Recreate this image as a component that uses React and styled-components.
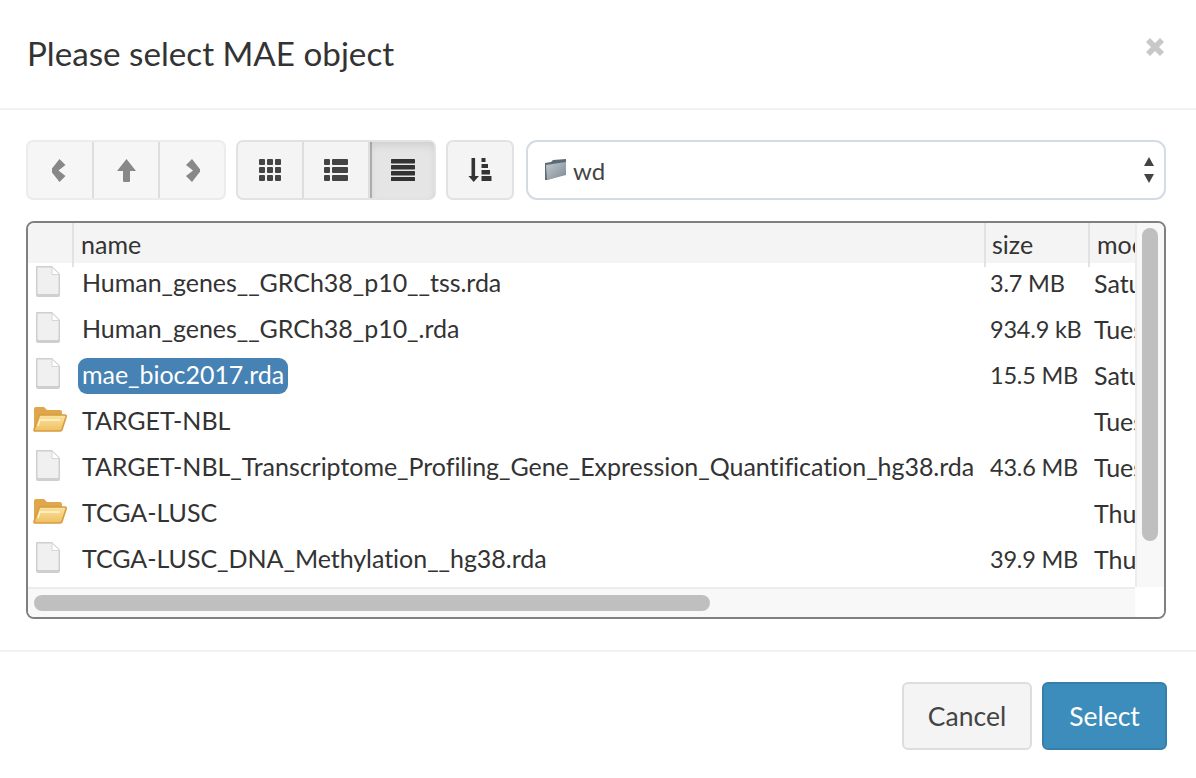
import React from "react";
import styled, { createGlobalStyle } from "styled-components";

const Global = createGlobalStyle`
  html, body { margin: 0; padding: 0; background: #fff; }
  body { font-family: "Lato", "Noto Sans", sans-serif; color: #333; }
  * { box-sizing: border-box; }
`;

const Modal = styled.div`width: 1196px; height: 778px; display: flex; flex-direction: column; background: #fff; overflow: hidden;`;
const Header = styled.header`height: 110px; flex: none; padding: 0 27px; display: flex; align-items: center; justify-content: space-between; border-bottom: 2px solid #f2f2f2;`;
const Title = styled.h4`margin: 0 0 2px; font-size: 33.2px; font-weight: 400; color: #333; line-height: 40px;`;
const Close = styled.button`border: 0; background: none; padding: 0; margin-right: 5px; width: 18px; height: 18px; display: flex; position: relative; top: -7px;`;
const Body = styled.main`flex: 1; padding: 30px 30px 0 26px; display: flex; flex-direction: column; gap: 21px;`;
const Toolbar = styled.div`display: flex; height: 60px; gap: 10px;`;
const Group = styled.div`display: flex; border: 2px solid ${p => p.$disabled ? "#ececec" : "#e2e2e2"}; border-radius: 7px; background: ${p => p.$disabled ? "#f6f6f6" : "#f4f4f4"}; overflow: hidden;`;
const ToolBtn = styled.button`
  width: ${p => p.$w || 66}px; border: 0; padding: 0; margin: 0; display: flex; align-items: center; justify-content: center;
  background: transparent;
  ${p => !p.$active && `& + & { border-left: 2px solid ${p.$disabled ? "#e6e6e6" : "#dedede"}; }`}
  ${p => p.$active && `background: #e5e5e5; box-shadow: inset 0 5px 9px rgba(0,0,0,.1), inset 0 0 0 2px #b4b4b4; margin: -2px -2px -2px 0; width: 68px; border-radius: 0 7px 7px 0; z-index: 1;`}
`;
const Select = styled.div`flex: 1; margin-left: 2px; border: 2px solid #d5dbe6; border-radius: 11px; display: flex; align-items: center; padding: 0 9px 0 16px; gap: 5px; font-size: 24px; color: #444;`;
const SelectText = styled.span`flex: 1;`;
const FileBox = styled.section`height: 398px; width: 1140px; border: 2px solid #808080; border-radius: 8px; display: grid; grid-template-columns: 1107px 1fr; grid-template-rows: 1fr 30px; overflow: hidden; font-size: 25px;`;
const Viewport = styled.div`overflow: hidden; display: flex; flex-direction: column;`;
const ColHead = styled.div`height: 40px; flex: none; background: #f4f4f4; display: grid; grid-template-columns: 44px 912px 104px 1fr; position: relative; z-index: 1;`;
const HeadCell = styled.div`padding-left: ${p => p.$pad ?? 6}px; padding-top: 3px; line-height: 36px; height: 44px; border-left: ${p => p.$first ? "0" : "2px solid #e2e2e2"}; overflow: hidden;`;
const Rows = styled.div`margin-top: -3px;`;
const Row = styled.div`height: 46px; display: grid; grid-template-columns: 50px 909px 104px 1fr; align-items: center; white-space: nowrap; padding-left: 3px;`;
const IconCell = styled.div`display: flex; justify-content: center; padding-right: 14px; margin-top: -4px;`;
const NameCell = styled.div``;
const Name = styled.span`
  display: inline-block; line-height: 32px; height: 36px; margin-top: 2px; padding: 0 4px; margin-left: -3px; border-radius: 9px; letter-spacing: -.04px;
  ${p => p.$selected && "background: #4682b4; color: #fff;"}
`;
const SizeCell = styled.div`overflow: hidden; font-size: 23.5px; letter-spacing: -.2px;`;
const Cell = styled.div`overflow: hidden;`;
const VTrack = styled.div`background: #f8f8f8; border-left: 2px solid #ececec; padding: 5px 5px 0;`;
const VThumb = styled.div`height: 313px; width: 16px; border-radius: 8px; background: #bfbfbf;`;
const HTrack = styled.div`background: #f8f8f8; border-top: 2px solid #ececec; padding: 6px 6px;`;
const HThumb = styled.div`height: 16px; width: 676px; border-radius: 8px; background: #bfbfbf;`;
const Corner = styled.div`background: #fff;`;
const Footer = styled.footer`height: 128px; flex: none; border-top: 2px solid #f2f2f2; display: flex; justify-content: flex-end; align-items: flex-start; padding: 30px 29px 0 0; gap: 10px;`;
const Btn = styled.button`
  height: 68px; border-radius: 6px; font: inherit; font-size: 26.5px; padding: 0;
  width: ${p => p.$primary ? 125 : 130}px;
  background: ${p => p.$primary ? "#3c8dbc" : "#f4f4f4"};
  color: ${p => p.$primary ? "#fff" : "#444"};
  border: 2px solid ${p => p.$primary ? "#367fa9" : "#ddd"};
`;

const Glyph = ({ w = 24, h = 24, fill, box, children }) => (
  <svg width={w} height={h} viewBox={box || `0 0 ${w} ${h}`} fill={fill}>{children}</svg>
);

const ChevLeft = () => <Glyph w={16} h={23} box="1.5 0 16 23" fill="#888"><path d="M9 0l6 6-7 5.5 7 5.5-6 6L0 11.5z" /></Glyph>;
const ChevRight = () => <Glyph w={16} h={23} box="-2 0 16 23" fill="#888"><path d="M6 0L0 6l7 5.5L0 17l6 6 9-11.5z" /></Glyph>;
const ArrowUp = () => <Glyph w={19} h={23} fill="#888"><path d="M9.5 0L19 12h-6v10a1 1 0 0 1-1 1H7a1 1 0 0 1-1-1V12H0z" /></Glyph>;
const Th = () => (
  <Glyph w={22} h={22} fill="#444">
    {[0, 8, 16].flatMap(y => [0, 8, 16].map(x => <rect key={`${x}-${y}`} x={x} y={y} width="6" height="6" rx="1" />))}
  </Glyph>
);
const ThList = () => (
  <Glyph w={24} h={22} fill="#444">
    {[0, 8, 16].map(y => <React.Fragment key={y}><rect x="0" y={y} width="6" height="6" rx="1" /><rect x="8" y={y} width="16" height="6" rx="1" /></React.Fragment>)}
  </Glyph>
);
const Justify = () => (
  <Glyph w={24} h={22} fill="#333">
    {[0, 6, 12, 18].map(y => <rect key={y} x="0" y={y} width="24" height="4.4" rx=".6" />)}
  </Glyph>
);
const Sort = () => (
  <Glyph w={24} h={24} fill="#333">
    <path d="M3.5 0h3.6v18H11l-5.3 6L.4 18h3.1z" />
    <rect x="13.5" y="0" width="4" height="4" />
    <rect x="13.5" y="6" width="6.5" height="4" />
    <rect x="13.5" y="12" width="8.5" height="4.5" />
    <rect x="13.5" y="18" width="10" height="5" />
  </Glyph>
);
const X = () => (
  <svg width="18" height="18" viewBox="0 0 18 18"><path d="M0 4l4-4 5 5 5-5 4 4-5 5 5 5-4 4-5-5-5 5-4-4 5-5z" fill="#c8c8c8" /></svg>
);
const Caret = () => (
  <svg width="12" height="26" viewBox="0 0 12 26"><path d="M6 0l5 9H1zM6 26l5-9H1z" fill="#444" /></svg>
);
const DocIcon = () => (
  <svg width="28" height="33" viewBox="1 0 28 33">
    <path d="M2 2a1 1 0 0 1 1-1h15l8 8v21a2 2 0 0 1-2 2H4a2 2 0 0 1-2-2z" fill="#cfcfcf" />
    <path d="M3.5 2.5h14l7 7V28a1 1 0 0 1-1 1h-19a1 1 0 0 1-1-1z" fill="#f0f0f0" />
    <path d="M18 2v7.5h7.5z" fill="#fff" stroke="#d6d6d6" strokeWidth="1" />
  </svg>
);
const FolderIcon = () => (
  <svg width="34" height="26" viewBox="-1 0 34 26" overflow="visible">
    <defs>
      <linearGradient id="fg" x1="0" y1="0" x2="0" y2="1"><stop offset="0" stopColor="#fbe3a0" /><stop offset="1" stopColor="#efc060" /></linearGradient>
    </defs>
    <path d="M1 3a2 2 0 0 1 2-2h8l3 3h13a2 2 0 0 1 2 2v3H6L1 24z" fill="#dfa64c" />
    <path d="M6.5 9H32a1.2 1.2 0 0 1 1.2 1.5L29 23.5a2 2 0 0 1-2 1.5H2a1 1 0 0 1-1-1.2z" fill="url(#fg)" stroke="#d69c3f" strokeWidth="1.6" />
    <path d="M5 20l2-6h20" fill="none" stroke="#fff3cf" strokeWidth="1.4" />
  </svg>
);
const GrayFolder = () => (
  <svg width="24" height="22" viewBox="0 0 24 22">
    <defs>
      <linearGradient id="gf" x1="0" y1="0" x2="1" y2="1"><stop offset="0" stopColor="#c2cad2" /><stop offset="1" stopColor="#7c8892" /></linearGradient>
    </defs>
    <path d="M1 4l6-1 2-2 13-1v15L3 21H1z" fill="#5e6a74" />
    <path d="M2 6l20-3v13L3 21z" fill="url(#gf)" />
  </svg>
);

const rows = [
  { t: "f", n: "Human_genes__GRCh38_p10__tss.rda", s: "3.7 MB", m: "Saturday" },
  { t: "f", n: "Human_genes__GRCh38_p10_.rda", s: "934.9 kB", m: "Tuesday" },
  { t: "f", n: "mae_bioc2017.rda", s: "15.5 MB", m: "Saturday", sel: true },
  { t: "d", n: "TARGET-NBL", s: "", m: "Tuesday" },
  { t: "f", n: "TARGET-NBL_Transcriptome_Profiling_Gene_Expression_Quantification_hg38.rda", s: "43.6 MB", m: "Tuesday" },
  { t: "d", n: "TCGA-LUSC", s: "", m: "Thursday" },
  { t: "f", n: "TCGA-LUSC_DNA_Methylation__hg38.rda", s: "39.9 MB", m: "Thursday" },
];

export default function App() {
  return (
    <Modal>
      <Global />
      <Header>
        <Title>Please select MAE object</Title>
        <Close aria-label="Close"><X /></Close>
      </Header>
      <Body>
        <Toolbar>
          <Group $disabled>
            <ToolBtn $disabled $w={64}><ChevLeft /></ToolBtn>
            <ToolBtn $disabled $w={66}><ArrowUp /></ToolBtn>
            <ToolBtn $disabled $w={66}><ChevRight /></ToolBtn>
          </Group>
          <Group>
            <ToolBtn $w={64}><Th /></ToolBtn>
            <ToolBtn $w={66}><ThList /></ToolBtn>
            <ToolBtn $active><Justify /></ToolBtn>
          </Group>
          <Group><ToolBtn $w={64}><Sort /></ToolBtn></Group>
          <Select>
            <GrayFolder />
            <SelectText>wd</SelectText>
            <Caret />
          </Select>
        </Toolbar>
        <FileBox>
          <Viewport>
            <ColHead>
              <HeadCell $first />
              <HeadCell $pad={7}>name</HeadCell>
              <HeadCell $pad={6}>size</HeadCell>
              <HeadCell $pad={7}>modified</HeadCell>
            </ColHead>
            <Rows>
              {rows.map(r => (
                <Row key={r.n}>
                  <IconCell>{r.t === "f" ? <DocIcon /> : <FolderIcon />}</IconCell>
                  <NameCell><Name $selected={r.sel}>{r.n}</Name></NameCell>
                  <SizeCell>{r.s}</SizeCell>
                  <Cell>{r.m}</Cell>
                </Row>
              ))}
            </Rows>
          </Viewport>
          <VTrack><VThumb /></VTrack>
          <HTrack><HThumb /></HTrack>
          <Corner />
        </FileBox>
      </Body>
      <Footer>
        <Btn>Cancel</Btn>
        <Btn $primary>Select</Btn>
      </Footer>
    </Modal>
  );
}
